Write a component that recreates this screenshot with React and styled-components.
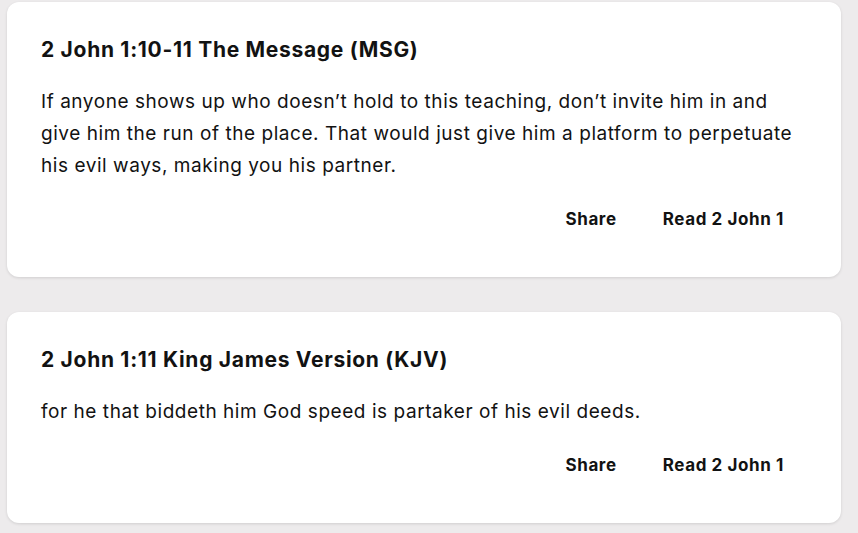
import React from 'react';
import styled, { createGlobalStyle } from 'styled-components';

const GlobalStyle = createGlobalStyle`
    html, body {
        margin: 0;
        padding: 0;
        background: #edebec;
    }
    body {
        font-family: Inter, "Noto Sans", sans-serif;
        color: #121212;
    }
`;

const Page = styled.div`
    display: flex;
    flex-direction: column;
    gap: 35px;
    padding: 2px 17px 10px 7px;
`;

const Card = styled.div`
    background: #fff;
    border-radius: 12px;
    box-shadow: 0 1px 3px rgba(0, 0, 0, 0.12);
    padding: 34px 34px 46px;
`;

const Title = styled.h2`
    margin: 0;
    font-size: 21px;
    line-height: 28px;
    font-weight: 700;
    letter-spacing: 0.7px;
`;

const Verse = styled.p`
    margin: 22px 0 0;
    font-size: 19px;
    line-height: 32px;
    font-weight: 400;
    letter-spacing: 0.55px;
`;

const Actions = styled.div`
    display: flex;
    justify-content: flex-end;
    margin-top: 25px;
`;

const Action = styled.span`
    padding: 0 23px;
    font-size: 17px;
    line-height: 24px;
    font-weight: 700;
    letter-spacing: 0.6px;
    cursor: pointer;
`;

const verses = [
    {
        ref: '2 John 1:10-11 The Message (MSG)',
        text: 'If anyone shows up who doesn\u2019t hold to this teaching, don\u2019t invite him in and give him the run of the place. That would just give him a platform to perpetuate his evil ways, making you his partner.',
    },
    {
        ref: '2 John 1:11 King James Version (KJV)',
        text: 'for he that biddeth him God speed is partaker of his evil deeds.',
    },
];

function App() {
    return (
        <>
            <GlobalStyle />
            <Page>
                {verses.map((v) => (
                    <Card key={v.ref}>
                        <Title>{v.ref}</Title>
                        <Verse>{v.text}</Verse>
                        <Actions>
                            <Action>Share</Action>
                            <Action>Read 2 John 1</Action>
                        </Actions>
                    </Card>
                ))}
            </Page>
        </>
    );
}

export default App;
